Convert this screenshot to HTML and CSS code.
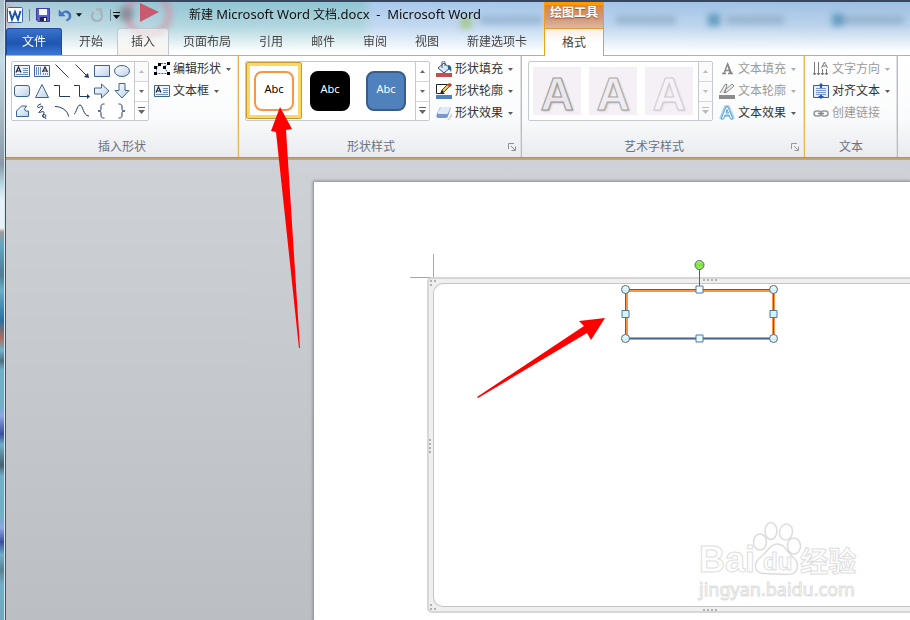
FILE: index.html
```html
<!DOCTYPE html>
<html lang="zh-CN">

<head>
    <meta charset="utf-8">
    <meta name="viewport" content="width=device-width, initial-scale=1.0">
    <title>新建 Microsoft Word 文档.docx - Microsoft Word</title>
    <link rel="stylesheet" href="styles.css">
</head>

<body>
    <svg width="0" height="0" class="defs" aria-hidden="true">
        <defs>
            <linearGradient id="ice" x1="0" y1="0" x2="1" y2="1">
                <stop offset="0" stop-color="#fff" />
                <stop offset="1" stop-color="#bcd2ea" />
            </linearGradient>
            <linearGradient id="handle" x1="0" y1="0" x2="0" y2="1">
                <stop offset="0" stop-color="#fff" />
                <stop offset=".6" stop-color="#c9f1f8" />
                <stop offset="1" stop-color="#eefcff" />
            </linearGradient>
            <linearGradient id="green" x1="0" y1="0" x2="0" y2="1">
                <stop offset="0" stop-color="#b7f58a" />
                <stop offset=".5" stop-color="#7be43a" />
                <stop offset="1" stop-color="#a5f070" />
            </linearGradient>
            <filter id="soft" x="-50%" y="-50%" width="200%" height="200%">
                <feGaussianBlur stdDeviation="3" />
            </filter>
        </defs>
        <symbol id="i-up" viewBox="0 0 7 4"><path d="M3.5 0 7 4H0z" fill="currentColor" /></symbol>
        <symbol id="i-down" viewBox="0 0 7 4"><path d="M0 0H7L3.5 4z" fill="currentColor" /></symbol>
        <symbol id="i-more" viewBox="0 0 7 7"><path d="M0 0H7V1H0zM0 3H7L3.500 7z" fill="currentColor" /></symbol>
        <symbol id="i-launch" viewBox="0 0 8 8"><path d="M.5 6V.5H6M3 3l4 4M7.500 3.500v4h-4" fill="none" stroke="currentColor" /></symbol>
    </svg>

    <div class="edge"></div>

    <div class="window">
        <header>
            <svg class="glass" aria-hidden="true">
                <g filter="url(#soft)">
                    <circle cx="142" cy="12" r="21" fill="none" stroke="#d98a9c" stroke-width="5" opacity=".8" />
                    <circle cx="-4" cy="14" r="14" fill="#d98a9c" opacity=".4" />
                    <circle cx="120" cy="12" r="8" fill="#40545e" opacity=".4" />
                    <path d="M610 18h60M720 18h58M838 18h60" stroke="#7d9cb8" stroke-width="8" opacity=".55" />
                    <path d="M702 18h12M826 18h12" stroke="#2f7ba2" stroke-width="12" opacity=".6" />
                    <circle cx="460" cy="21" r="6" fill="#9fc36f" opacity=".8" />
                    <path d="M474 18h62" stroke="#7f9dbd" stroke-width="8" opacity=".55" />
                </g>
                <path d="M134 1l19 9-19 10z" fill="#d0455c" opacity=".85" />
            </svg>

            <div class="left">
                <div class="titlebar">
                    <div class="quick">
                        <button aria-label="Word"><svg width="16" height="16"><rect x=".5" y=".5" width="15" height="15" rx="1" fill="#fff" stroke="#2f68b0" /><path d="M2.500 4l2.500 8.500L8 5l3 7.500L13.500 4" fill="none" stroke="#1b56a6" stroke-width="2" /></svg></button>
                        <i class="bar"></i>
                        <button aria-label="保存"><svg width="14" height="14"><path d="M.5.5h13v13H2L.5 12z" fill="#5b5fc7" stroke="#3d3f9c" /><path d="M3 1h8v6H3z" fill="#f4f6ff" /><path d="M4 9h7v4H4z" fill="#20244e" /><path d="M8 10h2v3H8z" fill="#fff" /></svg></button>
                        <button aria-label="撤消"><svg width="14" height="14"><path d="M1 2v6h6L5 6c2-3 6-1 6 2 0 2-1 3-3 4l1 1c3-1 4-3 4-5 0-5-6-7-9-3z" fill="#3f78c9" stroke="#3467b4" stroke-width=".5" /></svg></button>
                        <button class="small" aria-label="撤消列表"><svg width="6" height="4"><use href="#i-down" /></svg></button>
                        <button aria-label="重复"><svg width="14" height="14"><path d="M4 4a5 5 0 1 0 7 1M6 1.500h5v5" fill="none" stroke="#a9b4bb" stroke-width="2.500" /></svg></button>
                        <i class="bar"></i>
                        <button class="small" aria-label="自定义快速访问工具栏"><svg width="7" height="7"><use href="#i-more" /></svg></button>
                    </div>
                    <h1>新建 <span>Microsoft Word</span> 文档<span>.docx&nbsp; - &nbsp;Microsoft Word</span></h1>
                </div>
                <nav>
                    <button class="file">文件</button>
                    <button>开始</button>
                    <button class="hover">插入</button>
                    <button>页面布局</button>
                    <button>引用</button>
                    <button>邮件</button>
                    <button>审阅</button>
                    <button>视图</button>
                    <button>新建选项卡</button>
                </nav>
            </div>
            <div class="context">
                <div class="context-title">绘图工具</div>
                <button class="active">格式</button>
            </div>
        </header>

        <div class="ribbon">
            <section class="group insert">
                <div class="tools">
                    <div class="gallery">
                        <div class="shapes">
                            <button aria-label="文本框"><svg viewBox="0 0 16 16"><path d="M.5 2.500h15v11H.5z" fill="#eef4fb" stroke="#3c6494" /><path d="M2 9.500 4.500 4 7 9.500M3 8h3" fill="none" stroke="#223" stroke-width="1.200" /><path d="M9 5.500h5M9 7.500h5M9 9.500h5M2 11.500h12" stroke="#6d8fb8" /></svg></button>
                            <button aria-label="竖排文本框"><svg viewBox="0 0 16 16"><path d="M.5 2.500h15v11H.5z" fill="#eef4fb" stroke="#3c6494" /><path d="M8.500 9 11 4l2.500 5M9.500 8h3" fill="none" stroke="#223" stroke-width="1.200" /><path d="M2.500 4v8M4.500 4v8M6.500 4v8M9.500 10v2M11.500 10v2M13.500 10v2" stroke="#6d8fb8" /></svg></button>
                            <button aria-label="直线"><svg viewBox="0 0 16 16"><path d="M1.500 1.500l13 13" stroke="#1f3864" /></svg></button>
                            <button aria-label="箭头"><svg viewBox="0 0 16 16"><path d="M1.500 1.500l12 12" stroke="#1f3864" /><path d="M15 15l-5-1 4-4z" fill="#1f3864" /></svg></button>
                            <button aria-label="矩形"><svg viewBox="0 0 16 16"><path d="M.5 2.500h15v11H.5z" fill="url(#ice)" stroke="#3c6494" /></svg></button>
                            <button aria-label="椭圆"><svg viewBox="0 0 16 16"><ellipse cx="8" cy="8" rx="7.500" ry="5.500" fill="url(#ice)" stroke="#3c6494" /></svg></button>
                            <button aria-label="圆角矩形"><svg viewBox="0 0 16 16"><rect x=".5" y="2.500" width="15" height="11" rx="2.500" fill="url(#ice)" stroke="#3c6494" /></svg></button>
                            <button aria-label="三角形"><svg viewBox="0 0 16 16"><path d="M8 1.500 14.500 14.500h-13z" fill="url(#ice)" stroke="#3c6494" /></svg></button>
                            <button aria-label="肘形连接符"><svg viewBox="0 0 16 16"><path d="M0 2.500h5.500v11H16" fill="none" stroke="#1f3864" /></svg></button>
                            <button aria-label="肘形箭头"><svg viewBox="0 0 16 16"><path d="M0 2.500h5.500v11H14" fill="none" stroke="#1f3864" /><path d="M16 13.500 13 16v-5z" fill="#1f3864" /></svg></button>
                            <button aria-label="右箭头"><svg viewBox="0 0 16 16"><path d="M.5 5h7V1L15 8l-7.500 7v-4h-7z" fill="url(#ice)" stroke="#3c6494" /></svg></button>
                            <button aria-label="下箭头"><svg viewBox="0 0 16 16"><path d="M5 .5v7H1L8 15l7-7.500h-4v-7z" fill="url(#ice)" stroke="#3c6494" /></svg></button>
                            <button aria-label="任意多边形"><svg viewBox="0 0 16 16"><path d="M2.500 8l5-5h5l-2 3 1 2h3v5.500H2.500z" fill="url(#ice)" stroke="#3c6494" stroke-linejoin="round" /></svg></button>
                            <button aria-label="曲线"><svg viewBox="0 0 16 16"><path d="M7 1C2 2 3 6 6 4s4 0 1 3-3 3 0 2 4 0 2 3 3 3 3 1-4-2-3 0 4 1 2 4" fill="none" stroke="#1f3864" /></svg></button>
                            <button aria-label="弧形"><svg viewBox="0 0 16 16"><path d="M1 3.500c6 0 13 4 13.500 10" fill="none" stroke="#1f3864" /></svg></button>
                            <button aria-label="自由曲线"><svg viewBox="0 0 16 16"><path d="M0 11c2 0 3-9 6-9s3 11 9 11" fill="none" stroke="#1f3864" /></svg></button>
                            <button aria-label="左大括号"><svg viewBox="0 0 16 16"><path d="M10.500 1C7 1 7 2 7 5s-.5 3-3 3c2.500 0 3 0 3 3s0 4 3.500 4" fill="none" stroke="#1f3864" /></svg></button>
                            <button aria-label="右大括号"><svg viewBox="0 0 16 16"><path d="M4.500 1C8 1 8 2 8 5s.5 3 3 3c-2.500 0-3 0-3 3s0 4-3.500 4" fill="none" stroke="#1f3864" /></svg></button>
                        </div>
                        <div class="scroll">
                            <button disabled aria-label="上一行"><svg width="5" height="3"><use href="#i-up" /></svg></button>
                            <button aria-label="下一行"><svg width="5" height="3"><use href="#i-down" /></svg></button>
                            <button aria-label="其他"><svg width="7" height="7"><use href="#i-more" /></svg></button>
                        </div>
                    </div>
                    <div class="commands">
                        <button><svg class="icon" viewBox="0 0 16 16"><path d="M2.500 12.500V7l4-4.500H14L10.500 6l3.500 6.500z" fill="#f4f8fd" stroke="#3c6494" stroke-dasharray="2 1" /><path d="M4 2h3v3H4zM13 1h3v3h-3zM0 5h3v3H0zM0 11h3v3H0zM13 11h3v3h-3zM9 5h3v3H9z" fill="#000" /></svg>编辑形状<svg class="caret"><use href="#i-down" /></svg></button>
                        <button><svg class="icon" viewBox="0 0 16 16"><path d="M.5 2.500h15v11H.5z" fill="#eef4fb" stroke="#3c6494" /><path d="M2 9.500 4.500 4 7 9.500M3 8h3" fill="none" stroke="#223" stroke-width="1.200" /><path d="M9 5.500h5M9 7.500h5M9 9.500h5M2 11.500h12" stroke="#6d8fb8" /></svg>文本框<svg class="caret"><use href="#i-down" /></svg></button>
                    </div>
                </div>
                <footer><h2>插入形状</h2></footer>
            </section>

            <section class="group styles">
                <div class="tools">
                    <div class="gallery">
                        <div class="swatches">
                            <button class="selected"><span class="swatch orange">Abc</span></button>
                            <button><span class="swatch black">Abc</span></button>
                            <button><span class="swatch blue">Abc</span></button>
                        </div>
                        <div class="scroll">
                            <button aria-label="上一行"><svg width="5" height="3"><use href="#i-up" /></svg></button>
                            <button aria-label="下一行"><svg width="5" height="3"><use href="#i-down" /></svg></button>
                            <button aria-label="其他"><svg width="7" height="7"><use href="#i-more" /></svg></button>
                        </div>
                    </div>
                    <div class="commands">
                        <button><svg class="icon" viewBox="0 0 16 16"><path d="M2 7l6-5 6 5-6 5z" fill="url(#ice)" stroke="#33506f" /><path d="M6 7V1.500c0-2 3-2 3 0V5" fill="none" stroke="#33506f" /><path d="M12 4c3 0 4 3 3 7-1-2-2-3-3-3z" fill="#2c5c98" /><path d="M0 12h16v4H0z" fill="#c0504d" /></svg>形状填充<svg class="caret"><use href="#i-down" /></svg></button>
                        <button><svg class="icon" viewBox="0 0 16 16"><path d="M11 1.500H.5v9h8" fill="none" stroke="#222" /><path d="M5 10l1-3 6-6 3 1-7 7z" fill="#ecc35c" stroke="#6b4b21" /><path d="M11 2l3-2 2 2-2 2z" fill="#b3442f" /><path d="M4 11l2-4 2 2z" fill="#222" /><path d="M0 12h16v4H0z" fill="#4f81bd" /></svg>形状轮廓<svg class="caret"><use href="#i-down" /></svg></button>
                        <button><svg class="icon" viewBox="0 0 16 16"><path d="M4 13l8 2 4-7v3l-3 4z" fill="#8a96a8" opacity=".5" /><path d="M5 2h8c1.500 0 2 1 1.500 2L12 11c0 1-1 2-2 2H2c-1 0-2-1-1.500-3L3 4c.5-1 1-2 2-2z" fill="#7898cc" /><path d="M5 2h8c1 0 1.500 1 1 2l-2 4c0 1-1 1-2 1H3c-1 0-1.500-1-1-2l2-4z" fill="#dfe9fa" /></svg>形状效果<svg class="caret"><use href="#i-down" /></svg></button>
                    </div>
                </div>
                <footer><h2>形状样式</h2><button aria-label="设置形状格式"><svg width="8" height="8"><use href="#i-launch" /></svg></button></footer>
            </section>

            <section class="group wordart">
                <div class="tools">
                    <div class="gallery">
                        <div class="swatches">
                            <button disabled><span class="letter">A</span></button>
                            <button disabled><span class="letter mid">A</span></button>
                            <button disabled><span class="letter pale">A</span></button>
                        </div>
                        <div class="scroll">
                            <button disabled aria-label="上一行"><svg width="5" height="3"><use href="#i-up" /></svg></button>
                            <button disabled aria-label="下一行"><svg width="5" height="3"><use href="#i-down" /></svg></button>
                            <button disabled aria-label="其他"><svg width="7" height="7"><use href="#i-more" /></svg></button>
                        </div>
                    </div>
                    <div class="commands">
                        <button disabled><svg class="icon" viewBox="0 0 16 16"><path d="M3 12.500h4M9 12.500h5M5 12.500 8.500 3l3.500 9M6 9.500h5" fill="none" stroke="#888" stroke-width="1.500" /><path d="M8 2h1l4 10h-2.500z" fill="#888" /></svg>文本填充<svg class="caret"><use href="#i-down" /></svg></button>
                        <button disabled><svg class="icon" viewBox="0 0 16 16"><path d="M1 10 6 1.500h2L6 10M5 10l1-3 7-6 2 2-7 6z" fill="#eee" stroke="#888" /><path d="M0 12h16v4H0z" fill="#8c8c8c" /></svg>文本轮廓<svg class="caret"><use href="#i-down" /></svg></button>
                        <button><svg class="icon" viewBox="0 0 16 16"><path d="M2 14 7 2h2l5 12M5 10h6" fill="none" stroke="#a4d4f4" stroke-width="4" stroke-linejoin="round" /><path d="M2 14 7 2h2l5 12h-2.500l-1.500-4H6l-1.500 4zM7 8h2.500L8 4.500z" fill="#fff" stroke="#3a8cc8" stroke-width=".8" /></svg>文本效果<svg class="caret"><use href="#i-down" /></svg></button>
                    </div>
                </div>
                <footer><h2>艺术字样式</h2><button disabled aria-label="设置文本效果格式"><svg width="8" height="8"><use href="#i-launch" /></svg></button></footer>
            </section>

            <section class="group text">
                <div class="tools">
                    <div class="commands">
                        <button disabled><svg class="icon" viewBox="0 0 16 16"><path d="M1.500 1v13M5.500 1v13M9.500 8v6M13.500 8v6M0 12l1.500 2L3 12M4 12l1.500 2L7 12M8 12l1.500 2 1.500-2M12 12l1.500 2 1.500-2M8.500 7 11.500 1l3 6M9.500 5h4" fill="none" stroke="#777" /></svg>文字方向<svg class="caret"><use href="#i-down" /></svg></button>
                        <button><svg class="icon" viewBox="0 0 16 16"><path d="M.5 2.500h15v12H.5z" fill="#e2ecfa" stroke="#3b5c9a" /><path d="M3 5.500h10M3 7.500h10M3 9.500h10M3 11.500h10" stroke="#7b98cc" /><path d="M8 0l3 3H9v2H7V3H5zM8 16l3-3H9v-1H7v1H5z" fill="#2357c5" /></svg>对齐文本<svg class="caret"><use href="#i-down" /></svg></button>
                        <button disabled><svg class="icon" viewBox="0 0 16 16"><rect x="1" y="6" width="7" height="5" rx="2.500" fill="none" stroke="#999" stroke-width="1.500" /><rect x="8" y="6" width="7" height="5" rx="2.500" fill="none" stroke="#999" stroke-width="1.500" /><path d="M5 8.500h6" stroke="#888" stroke-width="1.500" /></svg>创建链接</button>
                    </div>
                </div>
                <footer><h2>文本</h2></footer>
            </section>
        </div>

        <main>
            <article class="page">
                <svg class="crop" width="24" height="24"><path d="M23.500 0v23.500H0" fill="none" stroke="#a6a6a6" /></svg>
                <div class="canvas">
                    <div class="inner"></div>
                    <svg class="grips" width="300" height="332">
                        <g fill="none" stroke="#b0b0b0" stroke-width="2">
                            <path d="M274 1h16M274 331h16" stroke-dasharray="2 2" />
                            <path d="M1 160v16" stroke-dasharray="2 2" />
                            <path d="M1 2h6M1 6h2M1 326h2M1 330h6" stroke-dasharray="2 2" />
                        </g>
                    </svg>
                </div>

                <svg class="shape" width="160" height="90">
                    <rect x="6.500" y="30.500" width="147" height="48" fill="#fff" stroke="#f79646" stroke-width="3" />
                    <path d="M5.500 29.500h148v49H5.500zM79.500 9v20" fill="none" stroke="#44648f" />
                    <g fill="url(#handle)" stroke="#5a6570">
                        <circle cx="5.500" cy="29.500" r="4" />
                        <circle cx="153.500" cy="29.500" r="4" />
                        <circle cx="5.500" cy="78.500" r="4" />
                        <circle cx="153.500" cy="78.500" r="4" />
                    </g>
                    <g fill="url(#handle)" stroke="#4a79a8">
                        <path d="M76 26h7v7h-7zM76 75h7v7h-7zM2 50.500h7v7H2zM150 50.500h7v7h-7z" />
                    </g>
                    <circle cx="79.500" cy="5" r="4.500" fill="url(#green)" stroke="#5a6570" />
                </svg>

                <div class="watermark">
                    <svg width="60" height="66">
                        <g fill="#fff" stroke="#dcdcdc" stroke-width="1.500">
                            <ellipse cx="11" cy="22" rx="6.500" ry="8" />
                            <ellipse cx="22" cy="11" rx="6" ry="8.500" />
                            <ellipse cx="37" cy="12" rx="6.500" ry="8" transform="rotate(12 37 12)" />
                            <ellipse cx="45" cy="26" rx="6.500" ry="8" />
                            <path d="M28 24c7 0 9 6 14 11s8 8 6 14-8 6-20 5-19 1-21-5 2-10 7-14 7-11 14-11z" />
                        </g>
                    </svg>
                    <p><span>Bai</span><span class="du">du</span><span class="cn">经验</span></p>
                    <p class="url">jingyan.baidu.com</p>
                </div>
            </article>
        </main>
    </div>

    <svg class="arrows" aria-hidden="true">
        <path d="M280 107l12 22-6 1 14 218h-1L276 132l-5-1z" fill="#f00" />
        <path d="M605 318l-14 22-4-7-109 65-1-1 107-71-5-5z" fill="#f00" />
    </svg>
</body>

</html>
```

FILE: styles.css
```css
* {
    box-sizing: border-box;
}

body {
    margin: 0;
    min-height: 100vh;
    display: flex;
    position: relative;
    overflow: hidden;
    font-family: "Noto Sans", "Noto Sans CJK SC", sans-serif;
    font-size: 12px;
    line-height: 16px;
    color: #333;
}

h1, h2, p {
    margin: 0;
    font-size: 12px;
    font-weight: normal;
}

h1 span {
    font-size: 13px;
}

button {
    border: 0;
    padding: 0;
    background: none;
    font: inherit;
    color: inherit;
    display: flex;
    align-items: center;
    justify-content: center;
}

button:disabled {
    color: #9a9a9a;
}

svg {
    flex: none;
}

.defs {
    position: absolute;
}

/* window border with the desktop behind it */
.edge {
    width: 6px;
    border-right: 1px solid #3f5460;
    box-shadow: inset -1px 0 #d5e6ee;
    background: linear-gradient(#a9bcc8 0, #c3dbe5 60px, #8a9aa8 165px, #b8dce6 185px, #e8f0fa 200px, #e8f0fa 228px, #a09a98 232px, #5fa7c4 245px, #4e7d94 275px, #68b0c8 290px, #2a6fa5 320px, #b06a5a 338px, #6fb3cb 350px, #4f6f80 361px, #6fb0c8 370px, #6fb0c8 405px, #8da6e4 416px, #3a4ea0 434px, #6fb0c8 445px, #455f70 465px, #6fb0c8 476px, #6fb0c8 516px, #8da6e4 528px, #3a4ea0 542px, #6fb0c8 555px, #5a8296 570px, #6fb0c8 585px, #6fa8c0 620px);
}

.window {
    flex: 1;
    min-width: 0;
    display: flex;
    flex-direction: column;
}

header {
    position: relative;
    display: flex;
    height: 56px;
    border-top: 2px solid #39455c;
    border-bottom: 1px solid #eda82e;
    background: linear-gradient(rgba(255, 255, 255, 0), rgba(255, 255, 255, .3) 45%, #fff 95%), linear-gradient(90deg, #aacbd8, #8fc5d2 200px, #8fc4d1 355px, #a9c9ec 368px, #9dbfe2);
}

.glass {
    position: absolute;
    left: 0;
    top: 0;
    width: 100%;
    height: 100%;
}

.left {
    position: relative;
    display: flex;
    flex-direction: column;
    margin-right: 3px;
}

.titlebar {
    display: flex;
    align-items: center;
    height: 26px;
    padding-bottom: 2px;
    color: #111;
}

.quick {
    display: flex;
    align-items: center;
    gap: 8px;
    width: 183px;
    padding: 2px 0 0 1px;
}

.quick .small {
    margin-left: -4px;
}

.bar {
    width: 1px;
    height: 12px;
    margin: 0 -2px;
    background: #6d8590;
}

nav {
    display: flex;
    height: 27px;
}

nav button {
    padding: 0 14px;
    color: #444;
}

nav .file {
    width: 56px;
    margin-right: 3px;
    border: 1px solid #1c4a9c;
    border-bottom: 0;
    border-radius: 3px 3px 0 0;
    background: linear-gradient(#3a72cc, #1f55b0 55%, #3b7ad8);
    color: #fff;
}

nav .hover {
    border: 1px solid #c3c8ce;
    border-bottom: 0;
    border-radius: 3px 3px 0 0;
    padding: 0 13px;
    background: linear-gradient(rgba(255, 255, 255, .5), #f8f3f0);
}

.context {
    position: relative;
    display: flex;
    flex-direction: column;
    width: 60px;
    height: 54px;
    margin-bottom: -1px;
    border: 1px solid #f0a018;
    border-width: 0 1px;
}

.context-title {
    height: 26px;
    border-top: 3px solid #ff9900;
    background: linear-gradient(#d98440, #d09a80 60%, #e0b8a0);
    color: #fff;
    font-weight: bold;
    text-align: center;
    text-shadow: 0 1px 1px #a05020;
}

.active {
    height: 28px;
    border-top: 1px solid #e89838;
    background: linear-gradient(#fbeee4, #fff 50%);
    color: #444;
}

.ribbon {
    display: flex;
    height: 104px;
    padding-bottom: 1px;
    border-bottom: 2px solid #c9a468;
    background: linear-gradient(#fff, #fafbfc 60%, #e9ebef 99%, #99958c 99%);
}

.group {
    display: flex;
    flex-direction: column;
    justify-content: space-between;
    border-right: 1px solid #edb550;
    box-shadow: inset -1px 0 #dfe1e4;
}

.insert {
    width: 233px;
}

.styles {
    width: 283px;
}

.wordart {
    width: 283px;
}

.text {
    width: 93px;
}

.tools {
    display: flex;
    gap: 6px;
    padding-left: 6px;
}

.insert .tools {
    gap: 5px;
    padding-left: 5px;
}

.text .tools {
    padding-left: 8px;
}

.gallery {
    display: flex;
    height: 60px;
    margin-top: 5px;
    border: 1px solid #c6c9cd;
    border-radius: 2px;
    background: #fff;
}

.shapes {
    display: grid;
    grid-template-columns: repeat(6, 20px);
    grid-template-rows: repeat(3, 20px);
    width: 122px;
    height: 58px;
}

.shapes button {
    padding-bottom: 2px;
}

.shapes svg, .icon {
    width: 16px;
    height: 16px;
}

.scroll {
    display: grid;
    grid-template-rows: repeat(3, 1fr);
    width: 14px;
    border-left: 1px solid #c6c9cd;
    color: #666;
}

.scroll button + button {
    border-top: 1px solid #d3d6da;
}

.scroll button:disabled {
    color: #bbb;
    background: #fafafa;
}

.commands {
    display: flex;
    flex-direction: column;
    padding-top: 2px;
}

.commands button {
    height: 22px;
    justify-content: flex-start;
    gap: 3px;
}

.caret {
    width: 5px;
    height: 3px;
    margin-left: 2px;
    opacity: .8;
}

footer {
    display: flex;
    align-items: center;
    height: 21px;
    color: #6a7280;
}

footer h2 {
    flex: 1;
    text-align: center;
}

footer button {
    width: 18px;
}

.styles footer button {
    color: #8a8f96;
}

.swatches {
    display: flex;
    width: 169px;
}

.swatches button {
    width: 56px;
    height: 58px;
}

.swatches .selected {
    height: 57px;
    border: 1px solid #c79a2a;
    border-radius: 2px;
    background: #fff;
    box-shadow: inset 0 0 0 3px #fbd866;
}

.swatch {
    width: 40px;
    height: 40px;
    padding-top: 8px;
    border: 2px solid #000;
    border-radius: 8px;
    font-size: 11px;
}

.orange {
    border-color: #f79646;
    color: #000;
}

.black {
    background: #000;
    color: #fff;
}

.blue {
    border-color: #385d8a;
    background: #4f81bd;
    color: #fff;
}

.letter {
    width: 48px;
    height: 48px;
    background: #f4f0f6;
    font: bold 46px/54px "Liberation Sans", sans-serif;
    color: #e9e7eb;
    -webkit-text-stroke: 1px #999;
    text-shadow: 1px 1px 2px #aaa;
}

.mid {
    color: #f0edf2;
    -webkit-text-stroke: 1px #aaa;
}

.pale {
    color: #f6f2f7;
    -webkit-text-stroke: 1px #d0ccd0;
    text-shadow: 1px 1px 2px #d5d0d5;
}

main {
    flex: 1;
    display: flex;
    padding: 22px 0 0 308px;
    background: linear-gradient(#ced1d6, #bbbec2);
}

.page {
    position: relative;
    flex: 1;
    min-height: 438px;
    padding-top: 72px;
    background: #fff;
    box-shadow: 0 0 3px 1px #80848a;
}

.crop {
    display: block;
    margin-left: 96px;
}

.canvas {
    position: relative;
    height: 336px;
    margin: -1px 0 0 113px;
    padding: 4px 0 4px 4px;
    border: 2px solid #d6d6d6;
    border-right: 0;
    border-radius: 5px 0 0 5px;
    background: #efefef;
}

.inner {
    height: 100%;
    border: 1px solid #c4c4c4;
    border-right: 0;
    border-radius: 10px 0 0 10px;
    background: #fff;
}

.grips {
    position: absolute;
    left: 0;
    top: 0;
}

.shape {
    position: absolute;
    left: 306px;
    top: 78px;
}

.watermark {
    position: absolute;
    left: 385px;
    top: 338px;
    color: #fff;
    -webkit-text-stroke: 1px #dedede;
}

.watermark svg {
    position: absolute;
    left: 50px;
    top: 0;
}

.watermark p {
    position: relative;
    display: flex;
    padding-top: 22px;
    font: bold 36px/36px "Liberation Sans", sans-serif;
}

.watermark .du {
    padding: 2px 5px 0 8px;
    font-size: 24px;
}

.watermark .cn {
    padding-left: 3px;
    font: bold 28px/36px "Noto Sans CJK SC", sans-serif;
}

.watermark .url {
    padding-top: 0;
    font: 18px/18px "Noto Sans", sans-serif;
}

.arrows {
    position: absolute;
    left: 0;
    top: 0;
    width: 100%;
    height: 100%;
    pointer-events: none;
}
```
